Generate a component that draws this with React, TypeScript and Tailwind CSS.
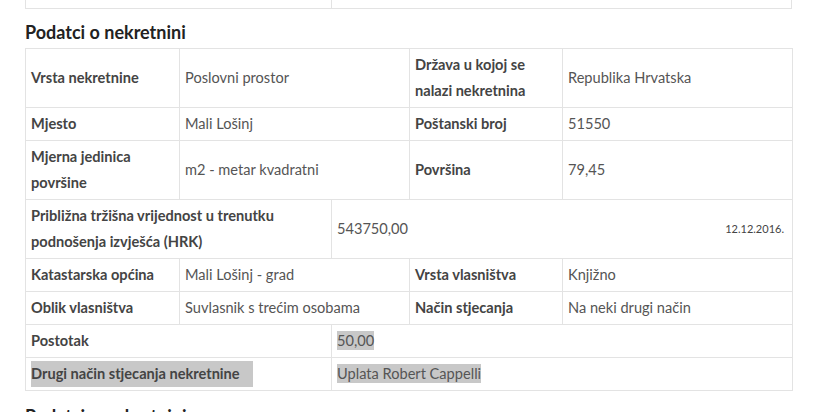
import React from "react";

const L = "border border-[#e3e3e3] px-[5px] py-[3px] font-bold text-[#444] align-middle";
const V = "border border-[#e3e3e3] px-[5px] py-[3px] text-[#555] align-middle";

export default function App() {
  return (
    <div className="min-h-[412px] bg-white text-[14.6px] leading-[26px]" style={{ fontFamily: "Lato, 'Open Sans', sans-serif" }}>
      <div className="ml-[25px] w-[767px]">
        <div className="flex h-[9px] border border-t-0 border-[#e3e3e3]">
          <div className="w-[306px] border-r border-[#e3e3e3]" />
          <div className="flex-1" />
        </div>
        <h2 className="mt-[11px] mb-[4px] text-[18px] leading-[24px] font-bold text-[#222]">Podatci o nekretnini</h2>
        <table className="w-[767px] table-fixed border-collapse">
          <colgroup>
            <col className="w-[154px]" />
            <col className="w-[152px]" />
            <col className="w-[78px]" />
            <col className="w-[153px]" />
            <col className="w-[230px]" />
          </colgroup>
          <tbody>
            <tr>
              <td className={L}>Vrsta nekretnine</td>
              <td className={V} colSpan={2}>Poslovni prostor</td>
              <td className={L}>Država u kojoj se nalazi nekretnina</td>
              <td className={V}>Republika Hrvatska</td>
            </tr>
            <tr>
              <td className={L}>Mjesto</td>
              <td className={V} colSpan={2}>Mali Lošinj</td>
              <td className={L}>Poštanski broj</td>
              <td className={V}>51550</td>
            </tr>
            <tr>
              <td className={L}>Mjerna jedinica površine</td>
              <td className={V} colSpan={2}>m2 - metar kvadratni</td>
              <td className={L}>Površina</td>
              <td className={V}>79,45</td>
            </tr>
            <tr>
              <td className={L} colSpan={2}>Približna tržišna vrijednost u trenutku podnošenja izvješća (HRK)</td>
              <td className={V} colSpan={3}>
                <div className="flex items-center justify-between pr-[3px]">
                  <span>543750,00</span>
                  <span className="text-[11px] text-[#444]">12.12.2016.</span>
                </div>
              </td>
            </tr>
            <tr>
              <td className={L}>Katastarska općina</td>
              <td className={V} colSpan={2}>Mali Lošinj - grad</td>
              <td className={L}>Vrsta vlasništva</td>
              <td className={V}>Knjižno</td>
            </tr>
            <tr>
              <td className={L}>Oblik vlasništva</td>
              <td className={V} colSpan={2}>Suvlasnik s trećim osobama</td>
              <td className={L}>Način stjecanja</td>
              <td className={V}>Na neki drugi način</td>
            </tr>
            <tr>
              <td className={L} colSpan={2}>Postotak</td>
              <td className={V} colSpan={3}>
                <span className="bg-[#c8c8c8] py-[1px]">50,00</span>
              </td>
            </tr>
            <tr>
              <td className={L} colSpan={2}>
                <span className="inline-block w-[222px] bg-[#c8c8c8]">Drugi način stjecanja nekretnine</span>
              </td>
              <td className={V} colSpan={3}>
                <span className="bg-[#c8c8c8] py-[1px]">Uplata Robert Cappelli</span>
              </td>
            </tr>
          </tbody>
        </table>
        <h2 className="mt-[13px] text-[18px] leading-[24px] font-bold text-[#222]">Podatci o pokretnini</h2>
      </div>
    </div>
  );
}
